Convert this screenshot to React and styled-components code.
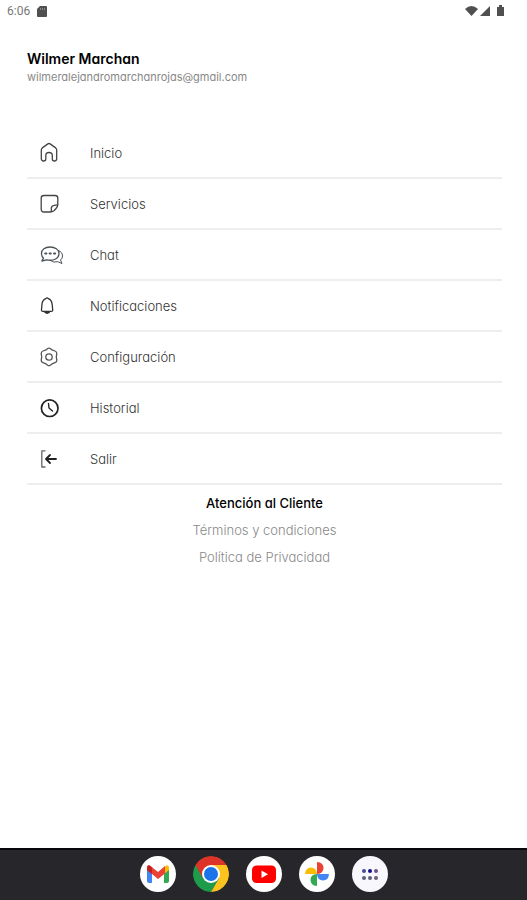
import React from "react";
import styled, { createGlobalStyle } from "styled-components";

const opciones = [
  { nombre: "Inicio", Icono: IconoInicio },
  { nombre: "Servicios", Icono: IconoServicios },
  { nombre: "Chat", Icono: IconoChat },
  { nombre: "Notificaciones", Icono: IconoCampana },
  { nombre: "Configuración", Icono: IconoConfiguracion },
  { nombre: "Historial", Icono: IconoReloj },
  { nombre: "Salir", Icono: IconoSalir },
];

const aplicaciones = [
  { nombre: "Gmail", Logo: LogoGmail, fondo: "#fff" },
  { nombre: "Chrome", Logo: LogoChrome, fondo: "transparent" },
  { nombre: "YouTube", Logo: LogoYoutube, fondo: "#fff" },
  { nombre: "Fotos", Logo: LogoFotos, fondo: "#fff" },
  { nombre: "Aplicaciones", Logo: LogoAplicaciones, fondo: "#f8f7fd" },
];

const App = () => {
  return (
    <>
      <GlobalStyle />
      <Pantalla>
        <BarraEstado>
          <Hora>
            6:06
            <svg width="10" height="11" viewBox="0 0 10 11" fill="#505050">
              <path d="M3 0h6q1 0 1 1v9q0 1-1 1H1q-1 0-1-1V3z" />
              <path d="M3.5 2v2M5.5 2v2M7.5 2v2" stroke="#888" />
            </svg>
          </Hora>
          <svg width="40" height="12" viewBox="0 0 40 12" fill="#505050">
            <path d="M1 4Q7.500-2 14 4L7.500 11z" />
            <path d="M26 1v10H16z" />
            <path d="M33 2h2V0h3v2h2v9h-7z" />
          </svg>
        </BarraEstado>

        <Contenido>
          <Nombre>Wilmer Marchan</Nombre>
          <Correo>wilmeralejandromarchanrojas@gmail.com</Correo>

          <Menu>
            {opciones.map(({ nombre, Icono }) => (
              <Opcion key={nombre} href="#">
                <CajaIcono>
                  <Icono />
                </CajaIcono>
                {nombre}
              </Opcion>
            ))}
          </Menu>

          <Pie>
            <Enlace href="#" $destacado>
              Atención al Cliente
            </Enlace>
            <Enlace href="#">Términos y condiciones</Enlace>
            <Enlace href="#">Política de Privacidad</Enlace>
          </Pie>
        </Contenido>

        <BarraTareas>
          {aplicaciones.map(({ nombre, Logo, fondo }) => (
            <BotonApp key={nombre} type="button" aria-label={nombre} $fondo={fondo}>
              <Logo />
            </BotonApp>
          ))}
        </BarraTareas>
      </Pantalla>
    </>
  );
};

// ========== ICONOS ==========
function IconoInicio() {
  return (
    <Trazo viewBox="0 0 24 24">
      <path d="M1.300 8.900Q1.300 7.700 2.300 6.900L7.900 2.900Q9 2.100 10.100 2.900L15.700 6.900Q16.700 7.700 16.700 8.900V17.500Q16.700 20 14.500 20Q12.300 20 12.300 18V14.500Q12.300 11.500 9 11.500Q5.800 11.500 5.800 14.500V18Q5.800 20 3.600 20Q1.300 20 1.300 17.500Z" />
    </Trazo>
  );
}

function IconoServicios() {
  return (
    <Trazo viewBox="0 0 24 24">
      <path d="M4 3.500H15Q17.800 3.500 17.800 6V12.500Q17.800 14.500 16 16.500L14 18.700Q12.300 20 10 20H4Q1.200 20 1.200 17V6Q1.200 3.500 4 3.500Z" />
      <path d="M11.300 19.500V16.500Q11.300 13.600 14.200 13.300L17.600 12.800" />
    </Trazo>
  );
}

function IconoChat() {
  return (
    <Trazo viewBox="0 0 24 24" $color="#4b5358">
      <path d="M10 4C5 4 1.500 6.500 1.500 10.500C1.500 12.700 2.200 14 3.500 15.200L1.800 18L6.500 16.800C14 18.500 19 15 19 10.500C19 6.500 15 4 10 4Z" />
      <path d="M18.500 7.500Q22.500 9 22.500 13Q22.500 15.500 20.500 17L22 20.500L17.800 18.700Q13.500 20 10.500 17.600" strokeWidth="1" />
      <path d="M5.300 10.500h1M9.700 10.500h1M14.100 10.500h1" strokeWidth="2.200" />
    </Trazo>
  );
}

function IconoCampana() {
  return (
    <Trazo viewBox="0 0 24 24" $color="#333">
      <path d="M2.800 17.300Q1.300 17.300 1.500 15.500L2 10Q2.500 5.800 5.800 4.600Q7 3 8.300 4.600Q11.600 5.800 12.100 10L12.700 15.500Q12.900 17.300 11.400 17.300Z" />
      <path d="M4.800 18.300Q7.100 20.200 9.400 18.300Z" fill="#222" />
    </Trazo>
  );
}

function IconoConfiguracion() {
  return (
    <Trazo viewBox="0 0 24 24" $color="#555">
      <path d="M7.700 3.600Q9 2.600 10.300 3.600L12 4.900L15 6Q16.800 6.600 16.800 8.500L16.300 11.900L16.800 15.400Q16.800 17.100 15 17.700L12 18.900L10.300 20.200Q9 21.200 7.700 20.200L6 18.900L3 17.700Q1.200 17.100 1.200 15.400L1.700 11.900L1.200 8.500Q1.200 6.600 3 6L6 4.900Z" />
      <circle cx="9" cy="12" r="3.200" />
    </Trazo>
  );
}

function IconoReloj() {
  return (
    <Trazo viewBox="0 0 24 24" $color="#222" $grosor={1.7}>
      <circle cx="9.700" cy="12.200" r="8.300" />
      <path d="M8.500 7.500L9 12L12.500 15" strokeWidth="1.400" />
    </Trazo>
  );
}

function IconoSalir() {
  return (
    <Trazo viewBox="0 0 24 24" $color="#222">
      <path d="M5 3.800H1.800V20H5" stroke="#666" />
      <path d="M16 12H6.500M10 8L6 12L10 16" strokeWidth="1.800" />
    </Trazo>
  );
}

function LogoGmail() {
  return (
    <svg width="36" height="36" viewBox="0 0 36 36">
      <path d="M7 12v13q0 2 2 2h3V15z" fill="#4285f4" />
      <path d="M29 12v13q0 2-2 2h-3V15z" fill="#34a853" />
      <path d="M24 12l1.500-2Q29 8 29 12v2l-5 4z" fill="#fbbc04" />
      <path d="M7 14v-2q0-4 3.500-2L18 16l7-6v7.500L18 23l-6-5z" fill="#ea4335" />
      <path d="M7 12q0-4 3.500-2L12 11.500V18l-5-4z" fill="#c5221f" />
    </svg>
  );
}

function LogoChrome() {
  return (
    <svg width="36" height="36" viewBox="0 0 36 36">
      <path d="M18 18L2.400 9A18 18 0 0 0 18 36L25.800 22.500z" fill="#1e9b4b" />
      <path d="M18 9H33.600A18 18 0 0 1 18 36L25.800 22.500z" fill="#fcc31e" />
      <path d="M33.600 9A18 18 0 0 0 2.400 9L10.200 22.500L18 9z" fill="#dc3428" />
      <circle cx="18" cy="18" r="9" fill="#fff" />
      <circle cx="18" cy="18" r="7" fill="#1a73e8" />
    </svg>
  );
}

function LogoYoutube() {
  return (
    <svg width="36" height="36" viewBox="0 0 36 36">
      <rect x="6" y="9.500" width="24" height="17.500" rx="4.500" fill="#f00" />
      <path d="M15.500 14.500v7.500l6.500-3.750z" fill="#fff" />
    </svg>
  );
}

function LogoFotos() {
  return (
    <svg width="36" height="36" viewBox="0 0 36 36">
      <path d="M18 6Q24.500 6.500 24.500 12T18 18z" fill="#ea4335" />
      <path d="M30 18Q29.500 24.500 24 24.500T18 18z" fill="#4285f4" />
      <path d="M18 30Q11.500 29.500 11.500 24T18 18z" fill="#34a853" />
      <path d="M6 18Q6.500 11.500 12 11.500T18 18z" fill="#fbbc04" />
    </svg>
  );
}

function LogoAplicaciones() {
  return (
    <svg width="36" height="36" viewBox="0 0 36 36">
      <circle cx="12" cy="15" r="2" fill="#3d4f91" />
      <circle cx="18" cy="15" r="2" fill="#15108c" />
      <circle cx="24" cy="15" r="2" fill="#67558c" />
      <circle cx="12" cy="22" r="2" fill="#5d6178" />
      <circle cx="18" cy="22" r="2" fill="#62607a" />
      <circle cx="24" cy="22" r="2" fill="#6c6478" />
    </svg>
  );
}

// ========== ESTILOS ==========
const GlobalStyle = createGlobalStyle`
  * {
    box-sizing: border-box;
  }

  body {
    margin: 0;
    background: #fff;
    font-family: Inter, "Open Sans", sans-serif;
    font-feature-settings: "cv11";
  }
`;

const Pantalla = styled.div`
  min-height: 100vh;
  display: flex;
  flex-direction: column;
`;

const BarraEstado = styled.header`
  display: flex;
  justify-content: space-between;
  align-items: center;
  height: 22px;
  padding: 0 23px 0 7px;
`;

const Hora = styled.span`
  display: flex;
  align-items: center;
  gap: 7px;
  font-family: Roboto, sans-serif;
  font-size: 12px;
  color: #777;
`;

const Contenido = styled.main`
  flex: 1;
  padding: 28px 25px 28px 27px;
`;

const Nombre = styled.h1`
  margin: 0;
  font-size: 14px;
  font-weight: 600;
  line-height: 18px;
  color: #000;
`;

const Correo = styled.p`
  margin: 0;
  font-size: 11px;
  font-weight: 400;
  line-height: 18px;
  color: #888;
`;

const Menu = styled.nav`
  display: flex;
  flex-direction: column;
  margin-top: 42px;
`;

const Opcion = styled.a`
  display: flex;
  align-items: center;
  gap: 26px;
  height: 51px;
  padding-left: 13px;
  border-bottom: 2px solid #eee;
  font-size: 13px;
  font-weight: 300;
  color: #333;
  text-decoration: none;
`;

const CajaIcono = styled.span`
  display: flex;
  width: 24px;
`;

const Trazo = styled.svg`
  width: 24px;
  height: 24px;
  fill: none;
  stroke: ${({ $color }) => $color || "#444"};
  stroke-width: ${({ $grosor }) => $grosor || 1.3};
  stroke-linecap: round;
  stroke-linejoin: round;
`;

const Pie = styled.footer`
  display: flex;
  flex-direction: column;
  align-items: center;
  gap: 7px;
  margin-top: 8px;
`;

const Enlace = styled.a`
  font-size: 13px;
  font-weight: ${({ $destacado }) => ($destacado ? 500 : 300)};
  line-height: 20px;
  color: ${({ $destacado }) => ($destacado ? "#000" : "#888")};
  text-decoration: none;
`;

const BarraTareas = styled.nav`
  display: flex;
  justify-content: center;
  align-items: center;
  gap: 17px;
  height: 52px;
  padding-bottom: 2px;
  background: #26262b;
  border-top: 2px solid #08080a;
`;

const BotonApp = styled.button`
  display: flex;
  width: 36px;
  height: 36px;
  padding: 0;
  border: none;
  border-radius: 50%;
  background: ${({ $fondo }) => $fondo};
  overflow: hidden;
  cursor: pointer;
`;

export default App;
